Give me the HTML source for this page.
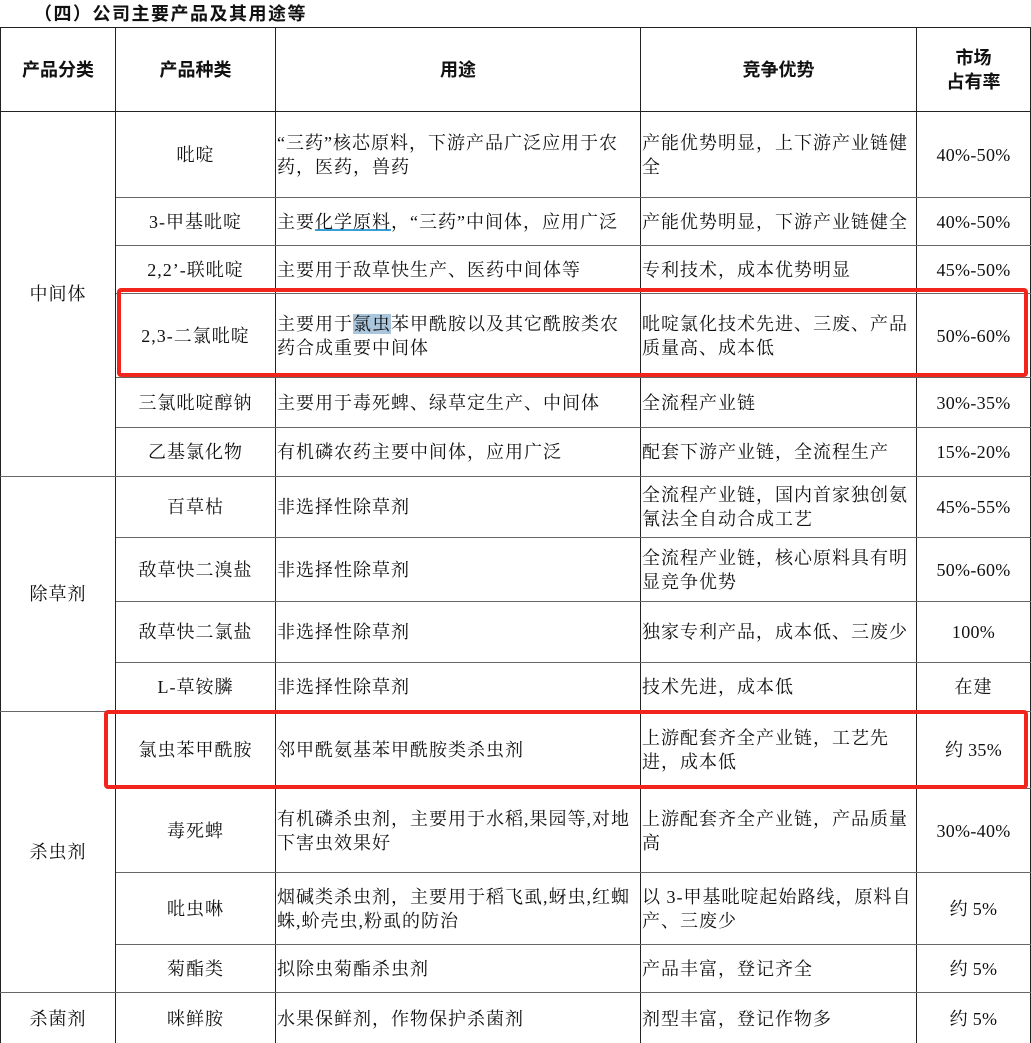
<!DOCTYPE html>
<html><head><meta charset="utf-8"><style>
html,body{margin:0;padding:0;background:#fff;width:1031px;height:1043px;overflow:hidden}
body{font-family:"Liberation Serif","Noto Serif CJK SC",serif;color:#111;font-size:18px;position:relative}
.t{position:absolute;left:34px;top:0px;font-family:"Liberation Sans","Noto Sans CJK SC",sans-serif;font-weight:bold;font-size:18px;letter-spacing:1.5px}
table{position:absolute;left:0;top:27px;border-collapse:collapse;table-layout:fixed}
td{border:1px solid #222;border-top-color:#666;border-bottom-color:#666;padding:0 2px;line-height:24px;text-align:center;vertical-align:middle;overflow:hidden;white-space:nowrap;letter-spacing:1px}
td.l{text-align:left;padding-left:1px}
td.p{letter-spacing:0.3px}
th{border:1px solid #222;font-family:"Liberation Sans","Noto Sans CJK SC",sans-serif;font-weight:bold;font-size:18px;line-height:24px}
.box{position:absolute;border:4px solid #f2251d;border-radius:4px}
.hl{background:#a9c6dd}
u{text-decoration:underline;text-decoration-color:#3a9fd6;text-decoration-thickness:2px}
</style></head><body>
<div class="t">（四）公司主要产品及其用途等</div>
<table>
<colgroup><col style="width:115px"><col style="width:160px"><col style="width:365px"><col style="width:276px"><col style="width:114px"></colgroup>
<tr style="height:84px"><th>产品分类</th><th>产品种类</th><th>用途</th><th>竞争优势</th><th>市场<br>占有率</th></tr>
<tr style="height:86px"><td rowspan="6">中间体</td><td>吡啶</td><td class="l">“三药”核芯原料，下游产品广泛应用于农<br>药，医药，兽药</td><td class="l">产能优势明显，上下游产业链健<br>全</td><td class="p">40%-50%</td></tr>
<tr style="height:48px"><td>3-甲基吡啶</td><td class="l">主要<u>化学原料</u>，“三药”中间体，应用广泛</td><td class="l">产能优势明显，下游产业链健全</td><td class="p">40%-50%</td></tr>
<tr style="height:48px"><td>2,2’-联吡啶</td><td class="l">主要用于敌草快生产、医药中间体等</td><td class="l">专利技术，成本优势明显</td><td class="p">45%-50%</td></tr>
<tr style="height:84px"><td>2,3-二氯吡啶</td><td class="l">主要用于<span class="hl">氯虫</span>苯甲酰胺以及其它酰胺类农<br>药合成重要中间体</td><td class="l">吡啶氯化技术先进、三废、产品<br>质量高、成本低</td><td class="p">50%-60%</td></tr>
<tr style="height:50px"><td>三氯吡啶醇钠</td><td class="l">主要用于毒死蜱、绿草定生产、中间体</td><td class="l">全流程产业链</td><td class="p">30%-35%</td></tr>
<tr style="height:49px"><td>乙基氯化物</td><td class="l">有机磷农药主要中间体，应用广泛</td><td class="l">配套下游产业链，全流程生产</td><td class="p">15%-20%</td></tr>
<tr style="height:61px"><td rowspan="4">除草剂</td><td>百草枯</td><td class="l">非选择性除草剂</td><td class="l">全流程产业链，国内首家独创氨<br>氰法全自动合成工艺</td><td class="p">45%-55%</td></tr>
<tr style="height:64px"><td>敌草快二溴盐</td><td class="l">非选择性除草剂</td><td class="l">全流程产业链，核心原料具有明<br>显竞争优势</td><td class="p">50%-60%</td></tr>
<tr style="height:61px"><td>敌草快二氯盐</td><td class="l">非选择性除草剂</td><td class="l">独家专利产品，成本低、三废少</td><td class="p">100%</td></tr>
<tr style="height:49px"><td>L-草铵膦</td><td class="l">非选择性除草剂</td><td class="l">技术先进，成本低</td><td>在建</td></tr>
<tr style="height:77px"><td rowspan="4">杀虫剂</td><td>氯虫苯甲酰胺</td><td class="l">邻甲酰氨基苯甲酰胺类杀虫剂</td><td class="l">上游配套齐全产业链，工艺先<br>进，成本低</td><td class="p">约 35%</td></tr>
<tr style="height:84px"><td>毒死蜱</td><td class="l">有机磷杀虫剂，主要用于水稻,果园等,对地<br>下害虫效果好</td><td class="l">上游配套齐全产业链，产品质量<br>高</td><td class="p">30%-40%</td></tr>
<tr style="height:72px"><td>吡虫啉</td><td class="l">烟碱类杀虫剂，主要用于稻飞虱,蚜虫,红蜘<br>蛛,蚧壳虫,粉虱的防治</td><td class="l">以 3-甲基吡啶起始路线，原料自<br>产、三废少</td><td class="p">约 5%</td></tr>
<tr style="height:48px"><td>菊酯类</td><td class="l">拟除虫菊酯杀虫剂</td><td class="l">产品丰富，登记齐全</td><td class="p">约 5%</td></tr>
<tr style="height:52px"><td>杀菌剂</td><td>咪鲜胺</td><td class="l">水果保鲜剂，作物保护杀菌剂</td><td class="l">剂型丰富，登记作物多</td><td class="p">约 5%</td></tr>
</table>
<div class="box" style="left:117px;top:288px;width:903px;height:81px"></div>
<div class="box" style="left:104px;top:710px;width:916px;height:71px"></div>
</body></html>
